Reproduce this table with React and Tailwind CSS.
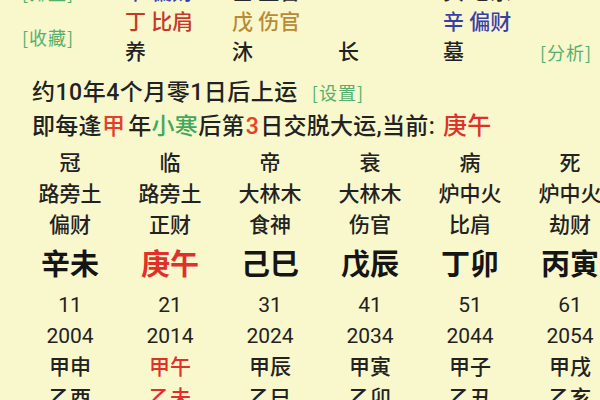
import React from 'react';

const FONT = { fontFamily: 'Roboto, "Noto Sans CJK SC", "Noto Sans", sans-serif' };

const columns = [
  ['冠', '路旁土', '偏财', '辛未', '11', '2004', '甲申', '乙酉'],
  ['临', '路旁土', '正财', '庚午', '21', '2014', '甲午', '乙未'],
  ['帝', '大林木', '食神', '己巳', '31', '2024', '甲辰', '乙巳'],
  ['衰', '大林木', '伤官', '戊辰', '41', '2034', '甲寅', '乙卯'],
  ['病', '炉中火', '比肩', '丁卯', '51', '2044', '甲子', '乙丑'],
  ['死', '炉中火', '劫财', '丙寅', '61', '2054', '甲戌', '乙亥'],
];

const header = [
  [
    { t: '辛 偏财', c: 'text-[#3a3fa8]' },
    { t: '壬 正官', c: 'text-[#2a2a2a]' },
    null,
    { t: '癸 七杀', c: 'text-[#2a2a2a]' },
  ],
  [
    { t: '丁 比肩', c: 'text-[#c23b2a]' },
    { t: '戊 伤官', c: 'text-[#b98a34]' },
    null,
    { t: '辛 偏财', c: 'text-[#3a3fa8]' },
  ],
  [
    { t: '养', c: 'text-[#222]' },
    { t: '沐', c: 'text-[#222]' },
    { t: '长', c: 'text-[#222]' },
    { t: '墓', c: 'text-[#222]' },
  ],
];

const link = "font-['Noto_Sans_CJK_SC'] text-[18px] tracking-[1px] text-[#55b06f]";

function Cell({ text, row, current }) {
  const red = current && (row === 3 || row >= 6);
  if (row === 3) {
    return (
      <div className={`h-[49px] leading-[49px] text-[29px] font-bold ${red ? 'text-[#e0302a]' : 'text-[#151515]'}`}>
        {text}
      </div>
    );
  }
  const weight = row === 4 || row === 5 ? 'font-normal' : 'font-medium';
  return (
    <div className={`h-[31px] leading-[31px] text-[21px] ${weight} ${red ? 'text-[#e0302a]' : 'text-[#222]'}`}>
      {text}
    </div>
  );
}

export default function App() {
  return (
    <div className="w-[600px] h-[400px] overflow-hidden bg-[#f9f7cc]" style={FONT}>
      {/* 藏干 / 十二长生 */}
      <div className="-mt-[23px] flex">
        <div className={`w-[125px] pl-[22px] flex flex-col ${link}`}>
          <span className="h-[30px] leading-[30px]">[排盘]</span>
          <span className="mt-[15px] h-[30px] leading-[30px]">[收藏]</span>
        </div>
        <div className="grid grid-cols-[107px_106px_105px_97px] text-[21px] font-medium">
          {header.map((row, i) =>
            row.map((cell, j) => (
              <div key={`${i}-${j}`} className={`h-[30px] leading-[30px] whitespace-nowrap ${cell ? cell.c : ''}`}>
                {cell ? cell.t : ''}
              </div>
            )),
          )}
        </div>
        <div className={`flex flex-col justify-end ${link}`}>
          <span className="h-[30px] leading-[30px]">[分析]</span>
        </div>
      </div>

      {/* 起运 */}
      <div className="mt-[8px] pl-[32px] text-[23px] font-medium text-[#222]">
        <div className="h-[34px] leading-[34px] flex items-baseline tracking-[0.5px]">
          <span>约10年4个月零1日后上运</span>
          <span className={`ml-[14px] font-normal ${link}`}>[设置]</span>
        </div>
        <div className="h-[34px] leading-[34px] flex items-baseline whitespace-pre tracking-[0.3px]">
          <span>即每逢</span>
          <span className="text-[#e3402c] mr-[3px]">甲</span>
          <span>年</span>
          <span className="text-[#3faa5c]">小寒</span>
          <span>后第</span>
          <span className="text-[#e3402c] mx-[1px]">3</span>
          <span>日交脱大运,当前:</span>
          <span className="ml-[8px] text-[24px] text-[#e0302a]">庚午</span>
        </div>
      </div>

      {/* 大运 */}
      <div className="mt-[5px] pl-[20px] flex">
        {columns.map((col, ci) => (
          <div key={ci} className="w-[100px] shrink-0 flex flex-col items-center text-center whitespace-nowrap">
            {col.map((t, ri) => (
              <Cell key={ri} text={t} row={ri} current={ci === 1} />
            ))}
          </div>
        ))}
      </div>
    </div>
  );
}
